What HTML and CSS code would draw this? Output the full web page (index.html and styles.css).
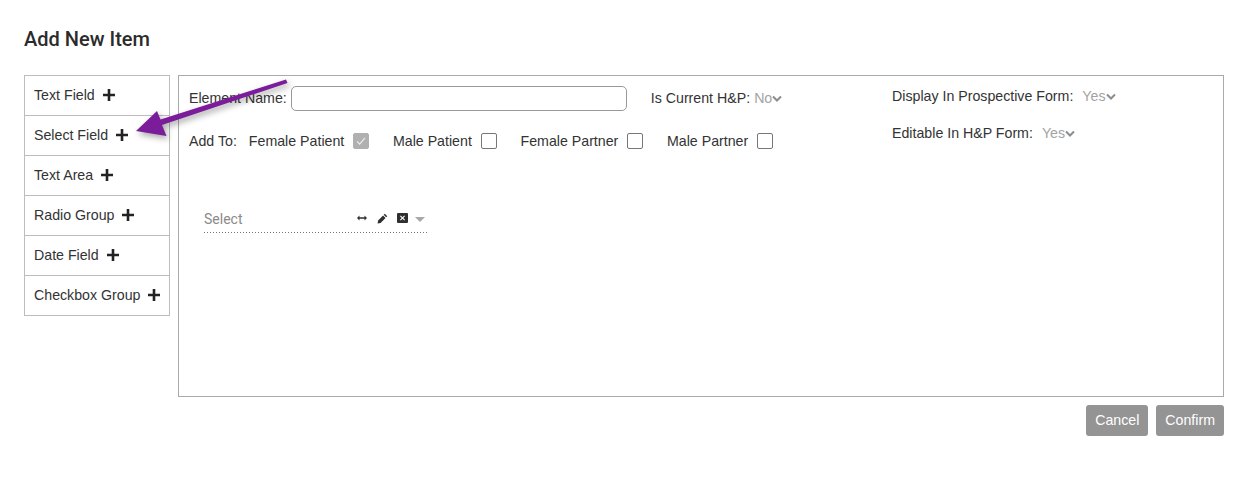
FILE: index.html
```html
<!DOCTYPE html>
<html lang="en">
<head>
<meta charset="utf-8">
<title>Add New Item</title>
<link rel="stylesheet" href="styles.css">
</head>
<body>
<div class="modal">
  <h3 class="title">Add New Item</h3>
  <div class="content">
    <ul class="palette">
      <li class="palette-item">Text Field<svg class="plus" viewBox="0 0 12 12"><path d="M4.700 0h2.600v4.700H12v2.600H7.300V12H4.700V7.300H0V4.700h4.700z"/></svg></li>
      <li class="palette-item">Select Field<svg class="plus" viewBox="0 0 12 12"><path d="M4.700 0h2.600v4.700H12v2.600H7.300V12H4.700V7.300H0V4.700h4.700z"/></svg></li>
      <li class="palette-item">Text Area<svg class="plus" viewBox="0 0 12 12"><path d="M4.700 0h2.600v4.700H12v2.600H7.300V12H4.700V7.300H0V4.700h4.700z"/></svg></li>
      <li class="palette-item">Radio Group<svg class="plus" viewBox="0 0 12 12"><path d="M4.700 0h2.600v4.700H12v2.600H7.300V12H4.700V7.300H0V4.700h4.700z"/></svg></li>
      <li class="palette-item">Date Field<svg class="plus" viewBox="0 0 12 12"><path d="M4.700 0h2.600v4.700H12v2.600H7.300V12H4.700V7.300H0V4.700h4.700z"/></svg></li>
      <li class="palette-item">Checkbox Group<svg class="plus" viewBox="0 0 12 12"><path d="M4.700 0h2.600v4.700H12v2.600H7.300V12H4.700V7.300H0V4.700h4.700z"/></svg></li>
    </ul>
    <section class="editor">
      <div class="settings">
        <div class="settings-main">
          <div class="name-row">
            <label class="label" for="el-name">Element Name:</label>
            <input class="name-input" id="el-name" type="text">
            <span class="label current">Is Current H&amp;P:</span>
            <span class="value">No</span>
            <svg class="chev" viewBox="0 0 10 7"><path d="M1 1.500l4 4 4-4" /></svg>
          </div>
          <div class="add-row">
            <span class="label add-label">Add To:</span>
            <span class="label">Female Patient</span><span class="box checked"><svg viewBox="0 0 16 16"><path d="M3.500 8.500l3 3 6-7"/></svg></span>
            <span class="label">Male Patient</span><span class="box"></span>
            <span class="label">Female Partner</span><span class="box"></span>
            <span class="label">Male Partner</span><span class="box"></span>
          </div>
        </div>
        <div class="settings-side">
          <div class="side-row"><span class="label">Display In Prospective Form:</span><span class="value side-value">Yes</span><svg class="chev" viewBox="0 0 10 7"><path d="M1 1.500l4 4 4-4" /></svg></div>
          <div class="side-row"><span class="label">Editable In H&amp;P Form:</span><span class="value side-value">Yes</span><svg class="chev" viewBox="0 0 10 7"><path d="M1 1.500l4 4 4-4" /></svg></div>
        </div>
      </div>
      <div class="select-preview">
        <span class="placeholder">Select</span>
        <svg class="tool tool-resize" viewBox="0 0 10 6"><path d="M0 3l2.500-2.500v1.700h5V.5L10 3 7.500 5.500V3.800h-5v1.700z"/></svg>
        <svg class="tool tool-edit" viewBox="0 0 12 12"><path d="M8.500.8l2.700 2.700-1.200 1.200-2.700-2.700zM6.600 2.700l2.700 2.700-5.400 5.400-3.300.6.600-3.300z"/></svg>
        <svg class="tool tool-close" viewBox="0 0 11 10"><path fill-rule="evenodd" d="M1 0h9a1 1 0 0 1 1 1v8a1 1 0 0 1-1 1H1a1 1 0 0 1-1-1V1a1 1 0 0 1 1-1zm2.800 2.500L3 3.300 4.700 5 3 6.700l.8.800 1.700-1.700 1.700 1.700.8-.8L6.300 5 8 3.300l-.8-.8-1.700 1.700z"/></svg>
        <span class="caret"></span>
      </div>
    </section>
  </div>
  <div class="actions">
    <button class="btn" type="button">Cancel</button>
    <button class="btn" type="button">Confirm</button>
  </div>
</div>
<svg class="arrow" width="1253" height="477" viewBox="0 0 1253 477"><path d="M286 79.500L287.500 83 162 125 166.500 136 136 131 157 111 160.500 119.500z"/></svg>
</body>
</html>
```
FILE: styles.css
```css
* { box-sizing: border-box; }
html, body { margin: 0; height: 477px; overflow: hidden; background: #fff; }
body { font-family: "Liberation Sans", Arial, sans-serif; font-size: 14.2px; color: #333; }
.modal { padding: 28px 29px 0 24px; }
.title { margin: 0 0 24px; height: 23px; font: 500 20px/23px Roboto, sans-serif; color: #2b2b2b; }
.content { display: flex; align-items: flex-start; gap: 8px; }
.palette { width: 146px; margin: 0; padding: 0; list-style: none; border: 1px solid #bdbdbd; border-bottom: 0; flex: none; }
.palette-item { height: 40px; display: flex; align-items: center; padding: 0 0 1px 9px; border-bottom: 1px solid #bdbdbd; white-space: nowrap; }
.plus { width: 12px; height: 12px; margin-left: 8px; fill: #222; flex: none; }
.editor { flex: 1; height: 322px; border: 1px solid #aaa; padding: 10px; }
.settings { display: flex; height: 121px; }
.settings-main { width: 703px; flex: none; }
.name-row { display: flex; align-items: center; height: 25px; }
.name-row .label, .name-row .value { margin-bottom: 1px; }
.name-input { width: 336px; height: 25px; margin-left: 4px; border: 1px solid #999; border-radius: 5px; background: #fff; padding: 0 8px; }
.name-row .current { margin-left: 24px; }
.value { color: #a3a3a3; margin-left: 4px; }
.chev { width: 10px; height: 7px; fill: none; stroke: #8c8c8c; stroke-width: 2; flex: none; }
.add-row { display: flex; align-items: center; height: 20px; margin-top: 20px; }
.add-row .label { white-space: nowrap; }
.add-label { margin-right: 12px; }
.box { width: 16px; height: 16px; margin: 0 23.7px 0 9px; border: 1px solid #777; border-radius: 2px; flex: none; background: #fff; }
.box.checked { background: #b0b0b0; border-color: #b0b0b0; }
.box svg { display: block; width: 14px; height: 14px; fill: none; stroke: #eee; stroke-width: 1.3; }
.side-row { display: flex; align-items: center; height: 20px; margin-bottom: 17px; }
.side-value { margin-left: 9px; }
.select-preview { display: flex; align-items: center; width: 225px; height: 26px; margin-left: 15px; padding-bottom: 4px; background: linear-gradient(to right, #777 1px, transparent 1px) left bottom / 3px 1px repeat-x; }
.placeholder { font: 14px Roboto, sans-serif; color: #8a8a8a; width: 153px; margin-top: 2px; }
.tool { fill: #2f2f2f; flex: none; }
.tool-resize { width: 10px; height: 6px; }
.tool-edit { width: 11px; height: 11px; margin-left: 10px; }
.tool-close { width: 11px; height: 10px; margin-left: 9px; }
.caret { width: 0; height: 0; margin-left: 7px; margin-top: 2px; border: 5px solid transparent; border-top: 5px solid #a8a8a8; border-bottom: 0; }
.actions { display: flex; justify-content: flex-end; gap: 8px; margin-top: 8px; }
.btn { height: 31px; padding: 0 9px 2px; border: 0; border-radius: 3px; background: #949494; color: #fff; font: 14.2px "Liberation Sans", Arial, sans-serif; }
.arrow { position: absolute; left: 0; top: 0; pointer-events: none; fill: #7b1c9a; filter: drop-shadow(2px 3px 3px rgba(0,0,0,.35)); }
```
